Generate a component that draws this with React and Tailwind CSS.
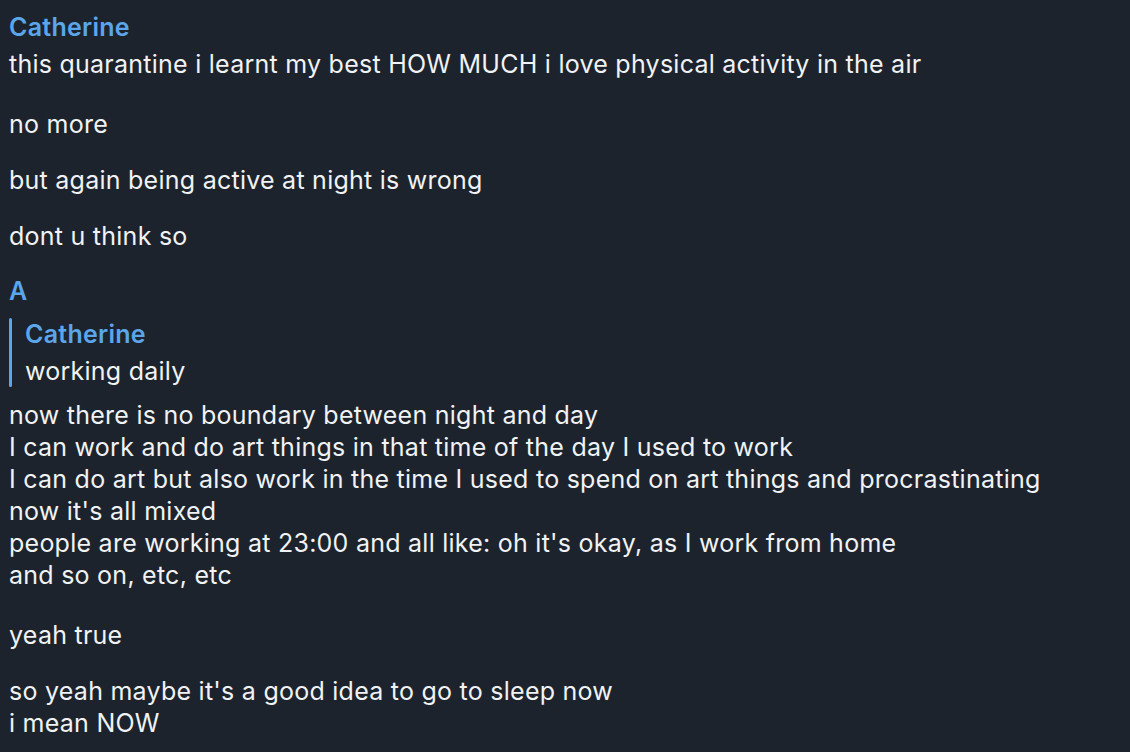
const MSGS_A = [
  'this quarantine i learnt my best HOW MUCH i love physical activity in the air',
]

const LINES_B = [
  'now there is no boundary between night and day',
  'I can work and do art things in that time of the day I used to work',
  'I can do art but also work in the time I used to spend on art things and procrastinating',
  "now it's all mixed",
  "people are working at 23:00 and all like: oh it's okay, as I work from home",
  'and so on, etc, etc',
]

function Name({ children, className = '' }) {
  return <div className={`text-[25px] leading-[32px] tracking-[0.25px] font-semibold text-[#5ba6ea] ${className}`}>{children}</div>
}

function Msg({ children, className = '' }) {
  return <div className={`text-[25px] leading-[32px] tracking-[0.25px] text-[#f0f2f4] ${className}`}>{children}</div>
}

export default function App() {
  return (
    <div
      className="h-[752px] w-[1130px] overflow-hidden bg-[#1c232c] pl-[9px] pt-[11px]"
      style={{ fontFamily: 'Inter, "Noto Sans", sans-serif' }}
    >
      {/* Catherine */}
      <Name>Catherine</Name>
      <Msg className="mt-[5px]">{MSGS_A[0]}</Msg>
      <Msg className="mt-[28px]">no more</Msg>
      <Msg className="mt-[24px]">but again being active at night is wrong</Msg>
      <Msg className="mt-[24px]">dont u think so</Msg>

      {/* A */}
      <Name className="mt-[23px]">A</Name>
      <div className="mt-[11px] flex">
        <div className="w-[3px] shrink-0 rounded-full bg-[#5ba6ea]" />
        <div className="pl-[13px]">
          <Name>Catherine</Name>
          <Msg className="mt-[5px]">working daily</Msg>
        </div>
      </div>
      <div className="mt-[12px]">
        {LINES_B.map((l) => (
          <Msg key={l}>{l}</Msg>
        ))}
      </div>
      <Msg className="mt-[28px]">yeah true</Msg>
      <div className="mt-[24px]">
        <Msg>so yeah maybe it's a good idea to go to sleep now</Msg>
        <Msg>i mean NOW</Msg>
      </div>
    </div>
  )
}
